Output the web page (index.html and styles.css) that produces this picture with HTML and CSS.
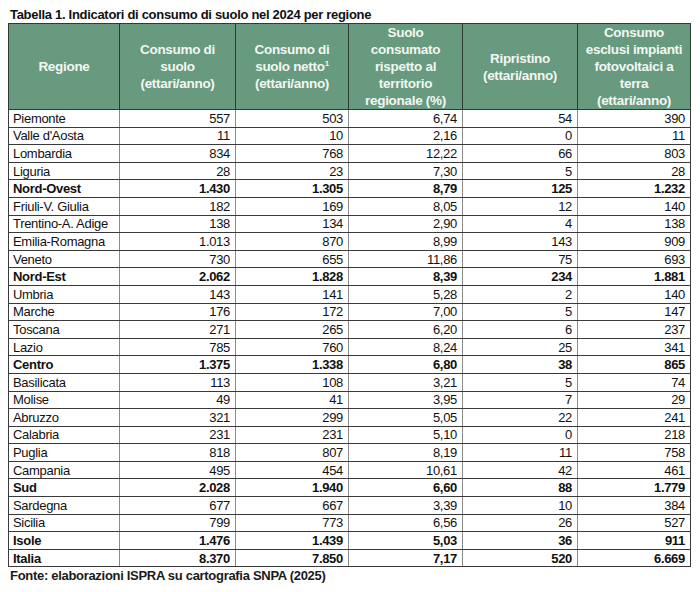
FILE: index.html
```html
<!DOCTYPE html>
<html lang="it">
<head>
    <meta charset="UTF-8">
    <title>Tabella 1. Indicatori di consumo di suolo</title>
    <link rel="stylesheet" href="styles.css">
</head>
<body>
    <div class="caption">Tabella 1. Indicatori di consumo di suolo nel 2024 per regione</div>
    <table class="data-table">
        <colgroup>
            <col style="width:111px">
            <col style="width:116px">
            <col style="width:113px">
            <col style="width:114px">
            <col style="width:115px">
            <col style="width:113px">
        </colgroup>
        <thead>
            <tr>
                <th>Regione</th>
                <th>Consumo di<br>suolo<br>(ettari/anno)</th>
                <th>Consumo di<br>suolo netto<sup>1</sup><br>(ettari/anno)</th>
                <th>Suolo<br>consumato<br>rispetto al<br>territorio<br>regionale (%)</th>
                <th>Ripristino<br>(ettari/anno)</th>
                <th>Consumo<br>esclusi impianti<br>fotovoltaici a<br>terra<br>(ettari/anno)</th>
            </tr>
        </thead>
        <tbody>
            <tr><td>Piemonte</td><td>557</td><td>503</td><td>6,74</td><td>54</td><td>390</td></tr>
            <tr><td>Valle d'Aosta</td><td>11</td><td>10</td><td>2,16</td><td>0</td><td>11</td></tr>
            <tr><td>Lombardia</td><td>834</td><td>768</td><td>12,22</td><td>66</td><td>803</td></tr>
            <tr><td>Liguria</td><td>28</td><td>23</td><td>7,30</td><td>5</td><td>28</td></tr>
            <tr class="total"><td>Nord-Ovest</td><td>1.430</td><td>1.305</td><td>8,79</td><td>125</td><td>1.232</td></tr>
            <tr><td>Friuli-V. Giulia</td><td>182</td><td>169</td><td>8,05</td><td>12</td><td>140</td></tr>
            <tr><td>Trentino-A. Adige</td><td>138</td><td>134</td><td>2,90</td><td>4</td><td>138</td></tr>
            <tr><td>Emilia-Romagna</td><td>1.013</td><td>870</td><td>8,99</td><td>143</td><td>909</td></tr>
            <tr><td>Veneto</td><td>730</td><td>655</td><td>11,86</td><td>75</td><td>693</td></tr>
            <tr class="total"><td>Nord-Est</td><td>2.062</td><td>1.828</td><td>8,39</td><td>234</td><td>1.881</td></tr>
            <tr><td>Umbria</td><td>143</td><td>141</td><td>5,28</td><td>2</td><td>140</td></tr>
            <tr><td>Marche</td><td>176</td><td>172</td><td>7,00</td><td>5</td><td>147</td></tr>
            <tr><td>Toscana</td><td>271</td><td>265</td><td>6,20</td><td>6</td><td>237</td></tr>
            <tr><td>Lazio</td><td>785</td><td>760</td><td>8,24</td><td>25</td><td>341</td></tr>
            <tr class="total"><td>Centro</td><td>1.375</td><td>1.338</td><td>6,80</td><td>38</td><td>865</td></tr>
            <tr><td>Basilicata</td><td>113</td><td>108</td><td>3,21</td><td>5</td><td>74</td></tr>
            <tr><td>Molise</td><td>49</td><td>41</td><td>3,95</td><td>7</td><td>29</td></tr>
            <tr><td>Abruzzo</td><td>321</td><td>299</td><td>5,05</td><td>22</td><td>241</td></tr>
            <tr><td>Calabria</td><td>231</td><td>231</td><td>5,10</td><td>0</td><td>218</td></tr>
            <tr><td>Puglia</td><td>818</td><td>807</td><td>8,19</td><td>11</td><td>758</td></tr>
            <tr><td>Campania</td><td>495</td><td>454</td><td>10,61</td><td>42</td><td>461</td></tr>
            <tr class="total"><td>Sud</td><td>2.028</td><td>1.940</td><td>6,60</td><td>88</td><td>1.779</td></tr>
            <tr><td>Sardegna</td><td>677</td><td>667</td><td>3,39</td><td>10</td><td>384</td></tr>
            <tr><td>Sicilia</td><td>799</td><td>773</td><td>6,56</td><td>26</td><td>527</td></tr>
            <tr class="total"><td>Isole</td><td>1.476</td><td>1.439</td><td>5,03</td><td>36</td><td>911</td></tr>
            <tr class="total"><td>Italia</td><td>8.370</td><td>7.850</td><td>7,17</td><td>520</td><td>6.669</td></tr>
        </tbody>
    </table>
    <div class="source">Fonte: elaborazioni ISPRA su cartografia SNPA (2025)</div>
</body>
</html>
```

FILE: styles.css
```css
body {
    margin: 0;
    padding: 6px 8px 0 8px;
    background: #ffffff;
    color: #111111;
    font-family: "Liberation Sans", Arial, sans-serif;
    font-size: 13px;
    letter-spacing: -0.3px;
}
.caption {
    font-weight: bold;
    font-size: 13px;
    line-height: 17px;
    padding-left: 2px;
}
.data-table {
    border-collapse: collapse;
    table-layout: fixed;
    width: 682px;
}
.data-table th {
    background-color: #679a7f;
    color: #f2f7f2;
    font-weight: bold;
    font-size: 13.5px;
    line-height: 17px;
    height: 85px;
    padding: 0 2px;
    border: 1px solid #2e3a33;
    text-align: center;
    vertical-align: middle;
}
.data-table th sup {
    font-size: 8px;
    line-height: 0;
}
.data-table td {
    height: 16.6px;
    padding: 0 5px 0 4px;
    border: 1px solid #3a3a3a;
    border-left-color: #8a8a8a;
    border-right-color: #8a8a8a;
    text-align: right;
    line-height: 15px;
    white-space: nowrap;
}
.data-table td:first-child {
    text-align: left;
    border-left-color: #3a3a3a;
}
.data-table td:last-child {
    border-right-color: #3a3a3a;
}
.data-table tr.total td {
    font-weight: bold;
}
.source {
    font-weight: bold;
    font-size: 13px;
    line-height: 18px;
    padding-left: 2px;
    color: #1a1a1a;
}
```
